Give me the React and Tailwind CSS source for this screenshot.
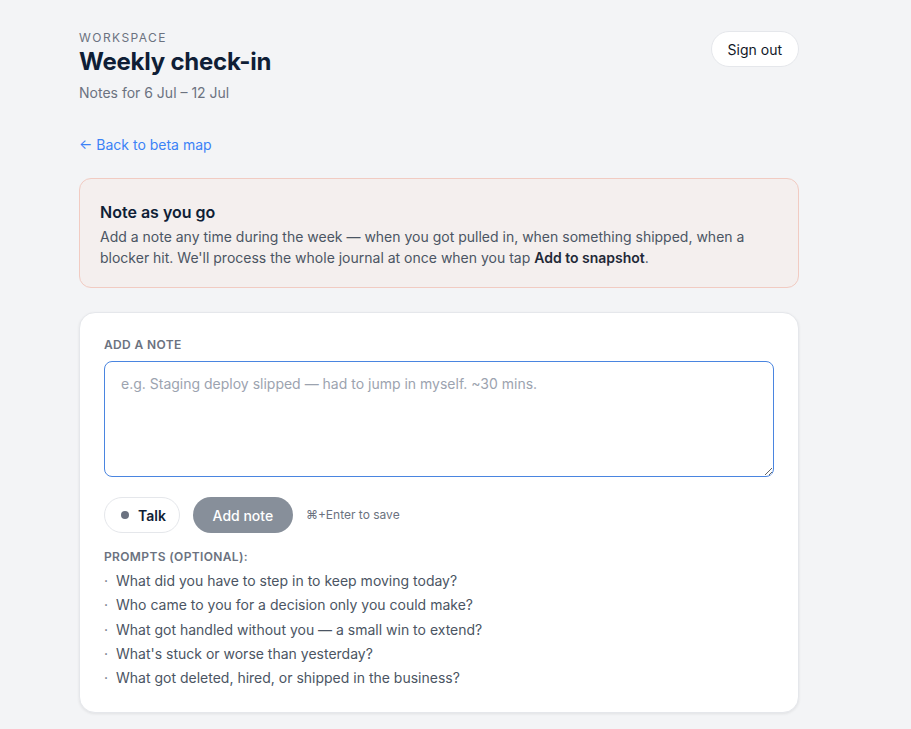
import React, { useState } from "react";

const prompts = [
  "What did you have to step in to keep moving today?",
  "Who came to you for a decision only you could make?",
  "What got handled without you — a small win to extend?",
  "What's stuck or worse than yesterday?",
  "What got deleted, hired, or shipped in the business?",
];

export default function App() {
  const [note, setNote] = useState("");

  return (
    <div className="min-h-screen bg-[#f3f4f6] font-['Inter',sans-serif] text-[#0f1e36]">
      <div className="w-[720px] ml-[79px] pt-[30px] pb-10">
        <header className="flex items-start justify-between">
          <div>
            <div className="text-[12px] leading-4 tracking-[0.12em] text-[#6b7280]">WORKSPACE</div>
            <h1 className="mt-[2px] text-[24px] leading-7 font-bold tracking-[-0.01em]">Weekly check-in</h1>
            <p className="text-[14px] leading-5 text-[#6b7280] mt-[7px]">Notes for 6 Jul – 12 Jul</p>
          </div>
          <button
            type="button"
            className="mt-px h-9 px-4 rounded-full bg-white border border-[#e5e7eb] text-[14px] text-[#111827]"
          >
            Sign out
          </button>
        </header>

        <a href="#" className="block mt-[32px] text-[14px] leading-5 text-[#3b82f6]">
          ← Back to beta map
        </a>

        <section className="mt-[23px] rounded-xl border border-[#f1cbc2] bg-[#f4efee] px-5 pt-[21px] pb-[19px]">
          <h2 className="text-[16px] leading-6 font-semibold">Note as you go</h2>
          <p className="mt-[2px] text-[14px] leading-[21px] text-[#4b5563]">
            Add a note any time during the week — when you got pulled in, when something shipped, when a blocker hit.
            We'll process the whole journal at once when you tap <b className="font-semibold text-[#1f2937]">Add to snapshot</b>.
          </p>
        </section>

        <section className="mt-[24px] rounded-2xl border border-[#e5e7eb] bg-white px-6 pt-[24px] pb-[22px] shadow-[0_1px_3px_rgba(0,0,0,0.08)]">
          <div className="text-[12px] leading-4 font-semibold tracking-[0.03em] text-[#6b7280]">ADD A NOTE</div>
          <textarea
            autoFocus
            value={note}
            onChange={(e) => setNote(e.target.value)}
            placeholder="e.g. Staging deploy slipped — had to jump in myself. ~30 mins."
            className="mt-[8px] block w-full h-[116px] rounded-lg border border-[#4a85e0] px-4 py-3 text-[14px] leading-5 text-[#111827] placeholder:text-[#9ca3af] outline-none"
          />
          <div className="mt-[20px] flex items-center">
            <button
              type="button"
              className="h-9 pl-4 pr-[13px] rounded-full border border-[#e5e7eb] bg-white flex items-center gap-[9px] text-[14px] font-semibold text-[#0f1e36]"
            >
              <span className="w-2 h-2 rounded-full bg-[#6b7280]" />
              Talk
            </button>
            <button
              type="button"
              className="ml-[13px] h-9 w-[100px] rounded-full bg-[#878f9a] text-[14px] font-medium text-white"
            >
              Add note
            </button>
            <span className="ml-[13px] text-[12px] text-[#6b7280]">⌘+Enter to save</span>
          </div>
          <div className="mt-[16px] text-[12px] leading-4 font-semibold tracking-[0.03em] text-[#6b7280]">
            PROMPTS (OPTIONAL):
          </div>
          <ul className="mt-[4px] text-[14px] leading-[24.3px] text-[#4b5563]">
            {prompts.map((p) => (
              <li key={p} className="flex">
                <span className="w-3 text-[#6b7280]">·</span>
                {p}
              </li>
            ))}
          </ul>
        </section>
      </div>
    </div>
  );
}
